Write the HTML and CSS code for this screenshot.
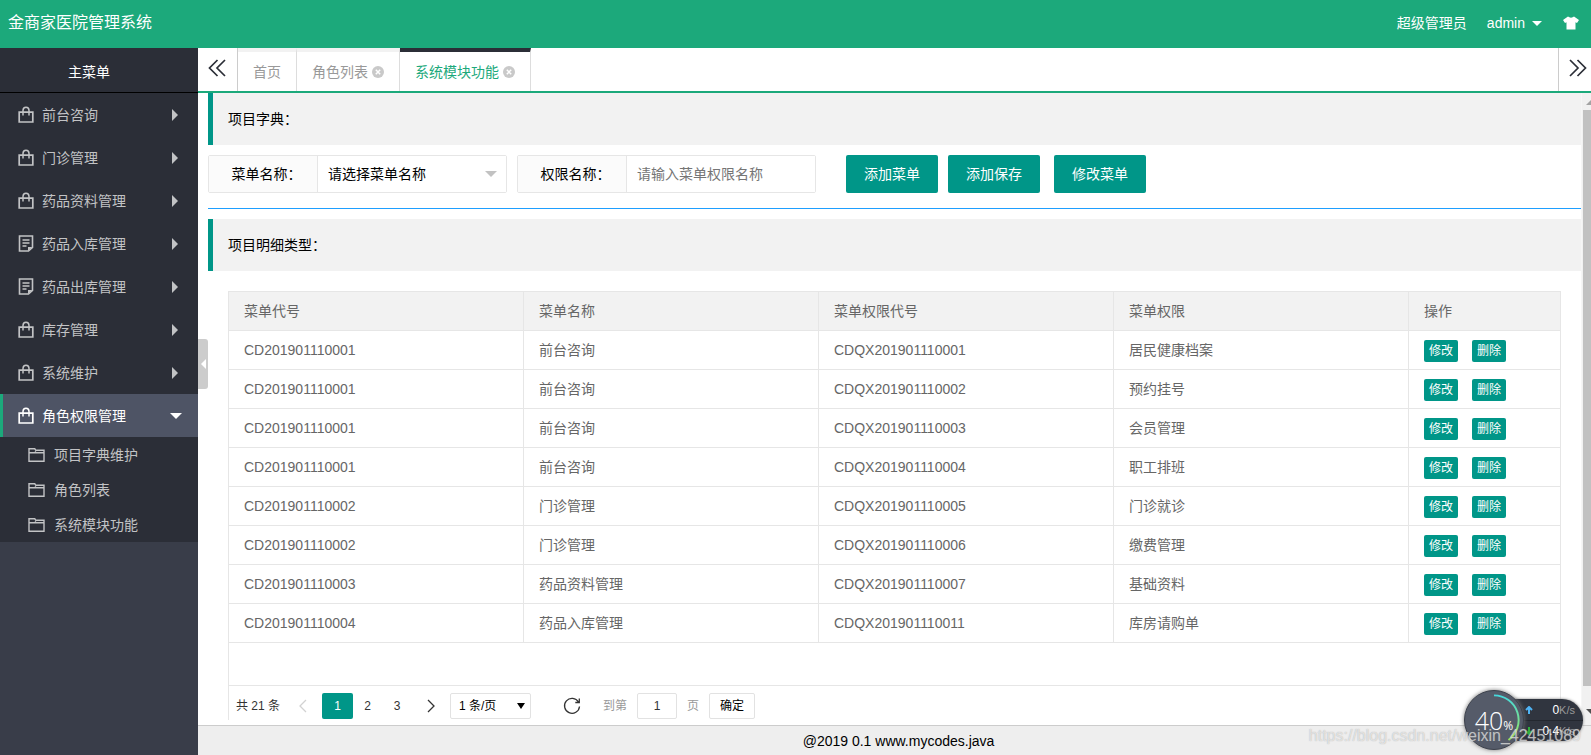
FILE: index.html
```
<!DOCTYPE html>
<html lang="zh-CN">
<head>
<meta charset="utf-8">
<title>金商家医院管理系统</title>
<link rel="stylesheet" href="styles.css">
</head>
<body>
<svg class="defs" width="0" height="0" aria-hidden="true">
  <symbol id="bag" viewBox="0 0 16 17"><path d="M1.200 6.200h13.600v9.800H1.200z" fill="none" stroke="currentColor" stroke-width="1.700"/><path d="M5 9.500V4.500a3 3.300 0 0 1 6 0v5" fill="none" stroke="currentColor" stroke-width="1.500"/></symbol>
  <symbol id="note" viewBox="0 0 16 17"><path d="M10.500 16H1.500V1h13v11.500zM4.500 5h7M4.500 8h7M4.500 11h4" fill="none" stroke="currentColor" stroke-width="1.600"/><path d="M10 16v-4h4.500z" fill="currentColor"/></symbol>
  <symbol id="folder" viewBox="0 0 17 14"><path d="M1 13.300V.8h5.800l1 1.500h8.200v11zM1 4.800h5.500l1.500-1.300M7 4.800h9" fill="none" stroke="currentColor" stroke-width="1.400"/></symbol>
  <symbol id="close" viewBox="0 0 12 12"><circle cx="6" cy="6" r="6" fill="#c9c9c9"/><path d="M3.800 3.800l4.400 4.400M8.200 3.800L3.800 8.200" stroke="#fff" stroke-width="1.500"/></symbol>
</svg>
<header class="top">
  <h1 class="brand">金商家医院管理系统</h1>
  <span class="role">超级管理员</span>
  <a class="user" href="#">admin <i class="caret"></i></a>
  <button class="skin" aria-label="换肤"><svg width="16" height="14" viewBox="0 0 16 14"><path d="M5 .5c1.500 1.500 4.500 1.500 6 0L16 4l-2 3-1.500-.8V13.500h-9V6.200L2 7 0 4z" fill="#fff"/></svg></button>
</header>
<div class="body">
  <nav class="side">
    <h2 class="side-title">主菜单</h2>
    <ul class="menu">
      <li><a href="#"><svg class="ico"><use href="#bag"/></svg>前台咨询<i class="arrow"></i></a></li>
      <li><a href="#"><svg class="ico"><use href="#bag"/></svg>门诊管理<i class="arrow"></i></a></li>
      <li><a href="#"><svg class="ico"><use href="#bag"/></svg>药品资料管理<i class="arrow"></i></a></li>
      <li><a href="#"><svg class="ico"><use href="#note"/></svg>药品入库管理<i class="arrow"></i></a></li>
      <li><a href="#"><svg class="ico"><use href="#note"/></svg>药品出库管理<i class="arrow"></i></a></li>
      <li><a href="#"><svg class="ico"><use href="#bag"/></svg>库存管理<i class="arrow"></i></a></li>
      <li><a href="#"><svg class="ico"><use href="#bag"/></svg>系统维护<i class="arrow"></i></a></li>
      <li><a href="#" class="open"><svg class="ico"><use href="#bag"/></svg>角色权限管理<i class="arrow"></i></a>
        <ul class="sub">
          <li><a href="#"><svg class="fico"><use href="#folder"/></svg>项目字典维护</a></li>
          <li><a href="#"><svg class="fico"><use href="#folder"/></svg>角色列表</a></li>
          <li><a href="#"><svg class="fico"><use href="#folder"/></svg>系统模块功能</a></li>
        </ul>
      </li>
    </ul>
    <button class="collapse" aria-label="收起菜单"></button>
  </nav>
  <div class="main">
    <div class="tabs">
      <button class="scroll left" aria-label="向左"><svg width="18" height="18" viewBox="0 0 18 18"><path d="M9.500 1L1.500 9l8 8M17 1L9 9l8 8"/></svg></button>
      <a class="tab" href="#">首页</a>
      <a class="tab" href="#">角色列表<svg class="x"><use href="#close"/></svg></a>
      <a class="tab active" href="#">系统模块功能<svg class="x"><use href="#close"/></svg></a>
      <button class="scroll right" aria-label="向右"><svg width="18" height="18" viewBox="0 0 18 18"><path d="M1 1l8 8-8 8M8.500 1l8 8-8 8"/></svg></button>
    </div>
    <div class="view">
      <main class="page">
        <h3 class="quote">项目字典：</h3>
        <form class="form">
          <div class="field"><label for="menu">菜单名称：</label><span class="pick"><select id="menu"><option>请选择菜单名称</option></select></span></div>
          <div class="field"><label for="perm">权限名称：</label><input id="perm" type="text" placeholder="请输入菜单权限名称"></div>
          <div class="actions">
            <button type="button" class="btn">添加菜单</button>
            <button type="button" class="btn">添加保存</button>
            <button type="button" class="btn last">修改菜单</button>
          </div>
        </form>
        <hr class="rule">
        <h3 class="quote">项目明细类型：</h3>
        <section class="grid">
          <table>
            <colgroup><col><col><col><col><col class="ops"></colgroup>
            <thead><tr><th>菜单代号</th><th>菜单名称</th><th>菜单权限代号</th><th>菜单权限</th><th>操作</th></tr></thead>
            <tbody>
              <tr><td>CD201901110001</td><td>前台咨询</td><td>CDQX201901110001</td><td>居民健康档案</td><td><button class="mini">修改</button><button class="mini">删除</button></td></tr>
              <tr><td>CD201901110001</td><td>前台咨询</td><td>CDQX201901110002</td><td>预约挂号</td><td><button class="mini">修改</button><button class="mini">删除</button></td></tr>
              <tr><td>CD201901110001</td><td>前台咨询</td><td>CDQX201901110003</td><td>会员管理</td><td><button class="mini">修改</button><button class="mini">删除</button></td></tr>
              <tr><td>CD201901110001</td><td>前台咨询</td><td>CDQX201901110004</td><td>职工排班</td><td><button class="mini">修改</button><button class="mini">删除</button></td></tr>
              <tr><td>CD201901110002</td><td>门诊管理</td><td>CDQX201901110005</td><td>门诊就诊</td><td><button class="mini">修改</button><button class="mini">删除</button></td></tr>
              <tr><td>CD201901110002</td><td>门诊管理</td><td>CDQX201901110006</td><td>缴费管理</td><td><button class="mini">修改</button><button class="mini">删除</button></td></tr>
              <tr><td>CD201901110003</td><td>药品资料管理</td><td>CDQX201901110007</td><td>基础资料</td><td><button class="mini">修改</button><button class="mini">删除</button></td></tr>
              <tr><td>CD201901110004</td><td>药品入库管理</td><td>CDQX201901110011</td><td>库房请购单</td><td><button class="mini">修改</button><button class="mini">删除</button></td></tr>
            </tbody>
          </table>
          <div class="pager">
            <span class="total">共 21 条</span>
            <button class="pg off" aria-label="上一页"><svg width="8" height="14" viewBox="0 0 8 14"><path d="M7 1L1 7l6 6"/></svg></button>
            <button class="pg cur">1</button>
            <button class="pg">2</button>
            <button class="pg">3</button>
            <button class="pg next" aria-label="下一页"><svg width="8" height="14" viewBox="0 0 8 14"><path d="M1 1l6 6-6 6"/></svg></button>
            <span class="size"><select aria-label="每页条数"><option>1 条/页</option></select></span>
            <button class="reload" aria-label="刷新"><svg width="18" height="18" viewBox="0 0 18 18"><path d="M15.500 5A7.500 7.500 0 1 0 16.500 9.500M16.300 1.500v4h-4"/></svg></button>
            <label class="goto" for="pageno">到第</label>
            <input id="pageno" type="text" value="1">
            <span class="unit">页</span>
            <button class="ok">确定</button>
          </div>
        </section>
      </main>
      <div class="bar" aria-hidden="true"><i class="up"></i><i class="thumb"></i><i class="down"></i></div>
    </div>
    <footer class="foot">@2019 0.1 www.mycodes.java</footer>
  </div>
</div>
<aside class="meter">
  <div class="speeds">
    <p><svg width="8" height="8" viewBox="0 0 8 8"><path d="M4 8V1M1 4l3-3 3 3" stroke="#4fb4f5"/></svg><span>0<small>K/s</small></span></p>
    <p><svg width="8" height="8" viewBox="0 0 8 8"><path d="M4 0v7M1 4l3 3 3-3" stroke="#2fae3c"/></svg><span>0.4<small>K/s</small></span></p>
  </div>
  <div class="dial">
    <svg class="ring" viewBox="0 0 60 60"><defs><linearGradient id="g" x1="0" y1="0" x2="0" y2="1"><stop offset="0" stop-color="#46d8dc"/><stop offset="1" stop-color="#9be65a"/></linearGradient></defs><path d="M30 4.500A25.500 25.500 0 0 1 45 50.600" fill="none" stroke="url(#g)" stroke-width="2"/></svg>
    <span>40<small>%</small></span>
  </div>
</aside>
<div class="mark">https://blog.csdn.net/weixin_42451089</div>
</body>
</html>
```
FILE: styles.css
```
* { box-sizing: border-box; }
body, h1, h2, h3, ul, p, hr { margin: 0; padding: 0; }
ul { list-style: none; }
a { color: inherit; text-decoration: none; }
body { height: 100vh; display: flex; flex-direction: column; overflow: hidden; background: #fff; color: #000; font: 14px/24px "Liberation Sans", "Noto Sans CJK SC", sans-serif; }
button, input, select { font: inherit; margin: 0; color: inherit; }
button { border: 0; padding: 0; background: none; }
.defs { position: absolute; }

.top { height: 48px; flex: none; display: flex; align-items: center; padding: 0 12px 2px 8px; background: #1ca97b; color: #fff; }
.brand { flex: 1; font-size: 16px; font-weight: 400; }
.role { margin-right: 20px; }
.user { display: flex; align-items: center; gap: 7px; margin-right: 21px; }
.caret { border: 5px solid transparent; border-top-color: #fff; border-bottom: 0; }
.skin { display: flex; }

.body { flex: 1; min-height: 0; display: flex; }
.side { position: relative; width: 198px; flex: none; background: #393d49; color: #c2c3c5; }
.side-title { height: 45px; padding-right: 20px; border-bottom: 1px solid #000; background: #2b2e37; color: #fff; font-size: 14px; font-weight: 400; line-height: 48px; text-align: center; }
.menu { background: #2b2e37; }
.menu a { display: flex; align-items: center; height: 43px; padding: 0 18px 0 15px; border-left: 3px solid transparent; }
.ico { width: 16px; height: 17px; margin-right: 8px; flex: none; }
.arrow { margin-left: auto; margin-right: 2px; border: 6px solid transparent; border-left-color: #c2c3c5; border-right: 0; }
.menu .open { padding-right: 14px; background: #4e5465; border-left-color: #1ca97b; color: #fff; }
.open .arrow { border: 6px solid transparent; border-top-color: #fff; border-bottom: 0; }
.menu .sub a { height: 35px; padding-left: 25px; }
.fico { width: 17px; height: 14px; margin-right: 9px; flex: none; }
.collapse { position: absolute; left: 198px; top: 291px; z-index: 1; display: flex; align-items: center; justify-content: center; width: 10px; height: 50px; background: #ccc; border-radius: 0 3px 3px 0; }
.collapse::before { content: ""; border: 5px solid transparent; border-right-color: #fff; border-left: 0; }

.main { flex: 1; min-width: 0; display: flex; flex-direction: column; }
.tabs { height: 45px; flex: none; display: flex; border-bottom: 2px solid #1ca97b; }
.scroll { display: flex; align-items: center; padding-bottom: 4px; }
.scroll path { fill: none; stroke: #2b2e37; stroke-width: 1.700; }
.left { width: 40px; padding-left: 10px; border-right: 1px solid #ccc; }
.right { width: 33px; margin-left: auto; padding-left: 10px; border-left: 1px solid #ccc; }
.tab { display: flex; align-items: center; padding: 0 15px; border-top: 4px solid #f2f2f2; border-right: 1px solid #ddd; color: #999; }
.tab.active { border-top-color: #2b2e37; color: #1ca97b; }
.x { width: 12px; height: 12px; margin-left: 4px; }

.view { flex: 1; min-height: 0; display: flex; overflow: hidden; }
.page { flex: 1; min-width: 0; padding: 0 0 5px 10px; }
.quote { padding: 14px 15px; border-left: 5px solid #009688; background: #f2f2f2; font-size: 14px; font-weight: 400; }
.form { display: flex; padding: 10px 0 15px; gap: 10px; }
.field { display: flex; width: 299px; height: 38px; border: 1px solid #e6e6e6; border-radius: 2px; }
.field label { width: 109px; flex: none; padding-left: 7px; border-right: 1px solid #e6e6e6; background: #fbfbfb; line-height: 36px; text-align: center; }
.field input, .field select { width: 100%; min-width: 0; height: 36px; padding: 0 10px; border: 0; background: #fff; appearance: none; }
.field input::placeholder { color: #757575; }
.pick, .size { position: relative; flex: 1; }
.pick::after { content: ""; position: absolute; right: 9px; top: 15px; border: 6px solid transparent; border-top-color: #c2c2c2; border-bottom: 0; }
.actions { display: flex; gap: 10px; margin-left: 20px; }
.btn { height: 38px; padding: 0 18px; border-radius: 2px; background: #009688; color: #fff; }
.btn.last { margin-left: 4px; }
.rule { height: 1px; margin-bottom: 10px; border: 0; background: #1e9fff; }
.grid { margin: 20px 20px 0; border: 1px solid #e6e6e6; border-bottom: 0; color: #666; }
table { width: 100%; table-layout: fixed; border-collapse: separate; border-spacing: 0; margin-bottom: 42px; }
.ops { width: 151px; }
th, td { height: 39px; padding: 0 15px; border-right: 1px solid #e6e6e6; border-bottom: 1px solid #e6e6e6; font-weight: 400; text-align: left; }
th { background: #f2f2f2; }
th:last-child, td:last-child { border-right: 0; }
.mini { height: 22px; padding: 0 5px; margin-right: 14px; border-radius: 2px; background: #009688; color: #fff; font-size: 12px; line-height: 22px; }

.pager { display: flex; align-items: center; height: 35px; padding: 5px 7px 0; border-top: 1px solid #e6e6e6; color: #333; font-size: 12px; }
.pager path { fill: none; stroke: currentColor; stroke-width: 1.300; }
.total { margin-right: 8px; }
.pg { display: flex; align-items: center; justify-content: center; width: 30px; height: 26px; }
.off { color: #d2d2d2; }
.cur { width: 31px; margin-left: 4px; border-radius: 2px; background: #009688; color: #fff; }
.cur + .pg { width: 29px; }
.next { width: 38px; }
.size { flex: none; width: 81px; height: 26px; margin-right: 32px; }
.size select { width: 100%; height: 26px; padding: 0 8px; border: 1px solid #e2e2e2; border-radius: 2px; background: #fff; color: #000; appearance: none; }
.size::after { content: ""; position: absolute; right: 6px; top: 10px; border: 4px solid transparent; border-top: 6px solid #000; border-bottom: 0; }
.reload { display: flex; margin-right: 22px; }
.goto, .unit { color: #999; }
#pageno { width: 40px; height: 26px; margin: 0 10px; border: 1px solid #e2e2e2; border-radius: 2px; color: #333; text-align: center; }
.ok { height: 26px; margin-left: 10px; padding: 0 10px; border: 1px solid #e2e2e2; border-radius: 2px; color: #000; }

.bar { width: 10px; flex: none; display: flex; flex-direction: column; overflow: hidden; background: #f1f1f1; border-left: 1px solid #f6f6f6; }
.up, .down { flex: none; align-self: flex-start; margin: 7px 4px 5px; border: 5px solid transparent; }
.up { border-top: 0; border-bottom-color: #a3a3a3; }
.down { border-bottom: 0; border-top-color: #505050; }
.thumb { width: 8px; flex: 1; align-self: flex-end; margin-bottom: 16px; background: #c1c1c1; }
.down { margin-bottom: 11px; }
.foot { height: 30px; flex: none; padding-left: 8px; border-top: 1px solid #ccc; background: #eee; line-height: 30px; text-align: center; }

.meter { position: absolute; right: 8px; bottom: 5px; z-index: 2; width: 119px; height: 60px; color: #fff; }
.speeds { position: absolute; right: 0; top: 9px; width: 90px; border-radius: 0 21px 21px 0; background: #30353f; box-shadow: 0 0 3px #777; font-size: 12px; }
.speeds p { display: flex; align-items: center; justify-content: space-between; height: 21px; padding: 0 8px 0 32px; }
.speeds p + p { border-top: 1px solid #23272f; }
.speeds path { fill: none; stroke-width: 2; }
.speeds small { color: #999; font-size: 11px; }
.dial { position: absolute; left: 0; top: 0; display: flex; align-items: center; justify-content: center; width: 60px; height: 60px; border: 1px solid #3c414c; border-radius: 50%; background: #555b69; box-shadow: 0 0 4px #777; font: 300 25px "Open Sans", Roboto, sans-serif; }
.dial small { font-size: 12px; font-weight: 400; }
.ring { position: absolute; left: 0; top: 0; width: 58px; height: 58px; }
.mark { position: absolute; right: 10px; bottom: 7px; z-index: 3; color: rgba(255, 255, 255, .6); font-size: 16px; text-shadow: 0 0 1px rgba(120, 120, 120, .6); }
```
